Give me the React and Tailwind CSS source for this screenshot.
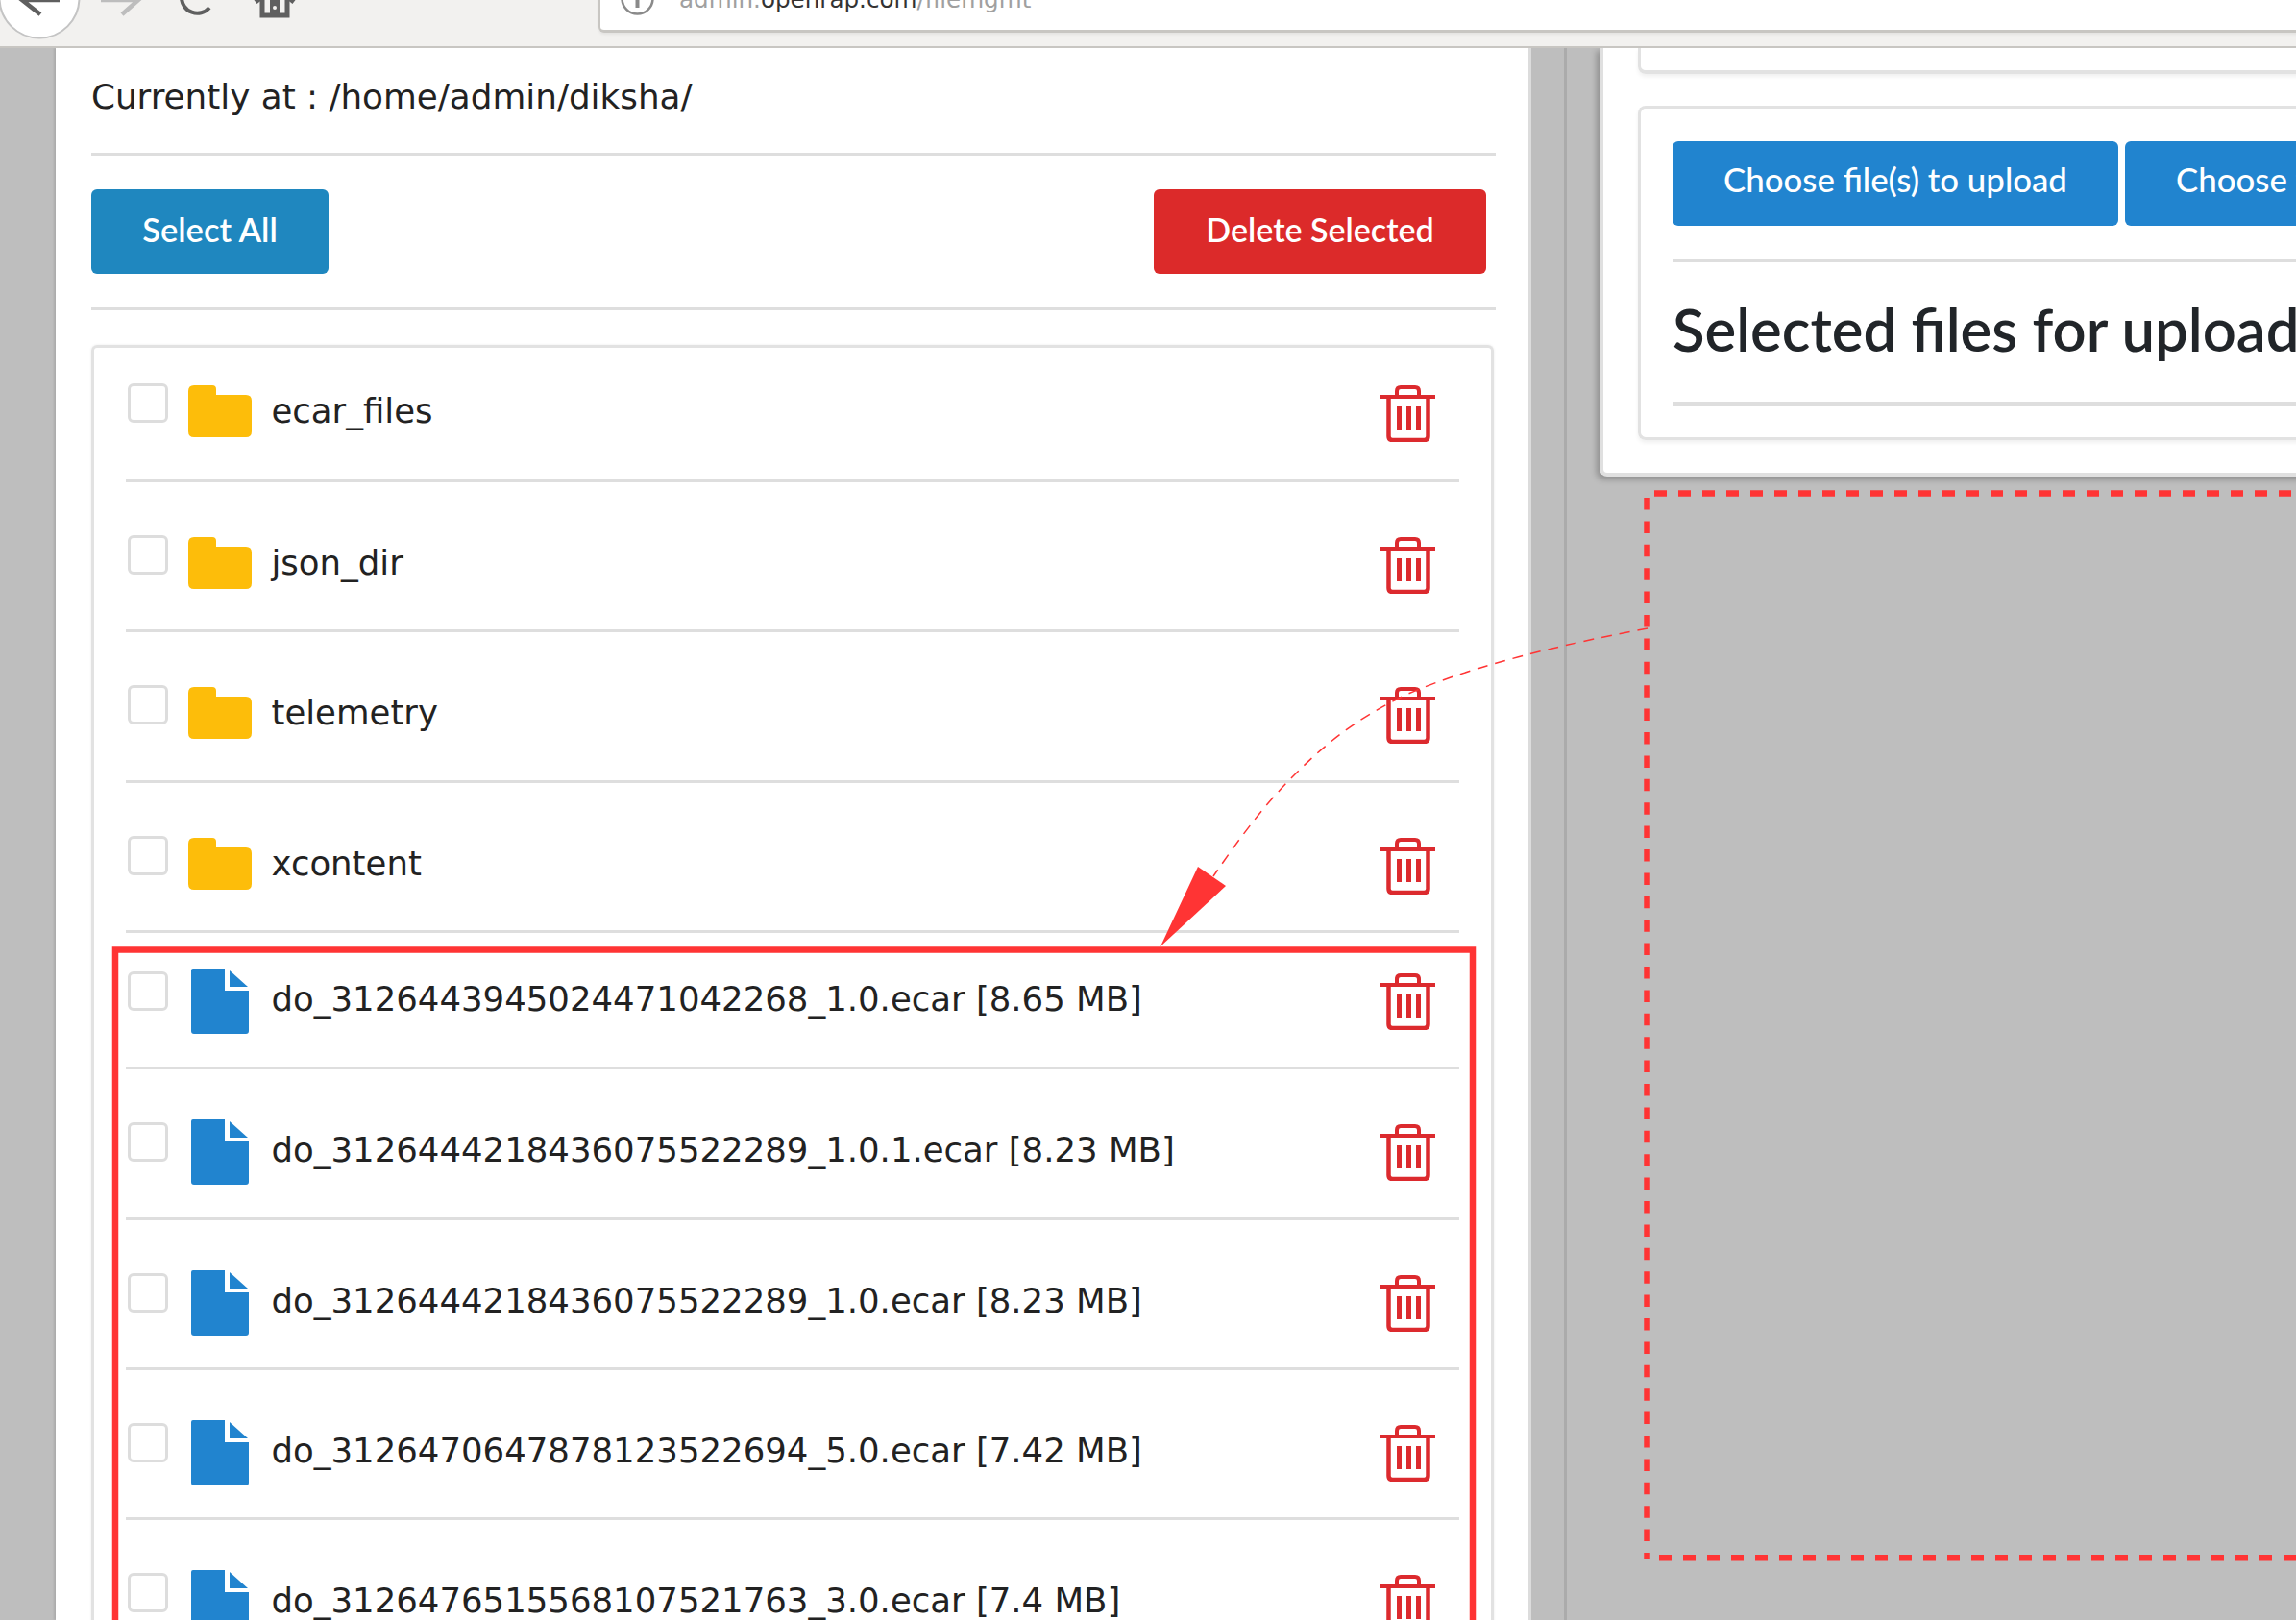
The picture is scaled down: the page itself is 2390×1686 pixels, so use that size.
const dejavu = 'font-["DejaVu_Sans",sans-serif]';

const folders = ['ecar_files', 'json_dir', 'telemetry', 'xcontent'];
const files = [
  'do_3126443945024471042268_1.0.ecar [8.65 MB]',
  'do_3126444218436075522289_1.0.1.ecar [8.23 MB]',
  'do_3126444218436075522289_1.0.ecar [8.23 MB]',
  'do_3126470647878123522694_5.0.ecar [7.42 MB]',
  'do_3126476515568107521763_3.0.ecar [7.4 MB]',
];

function FolderIcon() {
  return (
    <svg width="66" height="54" viewBox="0 0 66 54" className="shrink-0">
      <path d="M6 0h19q4 0 4 4v6h31q6 0 6 6v32q0 6-6 6H6q-6 0-6-6V6q0-6 6-6z" fill="#fdbd0a" />
    </svg>
  );
}

function FileIcon() {
  return (
    <svg width="60" height="68" viewBox="0 0 60 68" className="mt-[-5px] shrink-0">
      <path d="M2 0h33v23h25v42q0 3-3 3H3q-3 0-3-3V2q0-2 2-2z" fill="#2184cf" />
      <path d="M40 2l19 17H40z" fill="#2184cf" />
    </svg>
  );
}

function TrashIcon() {
  return (
    <svg width="57" height="59" viewBox="0 0 57 59" className="shrink-0" fill="none" stroke="#dc2a2e">
      <path d="M17 10V6q0-4 4-4h15q4 0 4 4v4" strokeWidth="4" />
      <path d="M0 12h57" strokeWidth="4" />
      <path d="M8.500 12v41q0 4 4 4h33q4 0 4-4V12" strokeWidth="4.500" />
      <path d="M19.500 22v24M29.500 22v24M39.500 22v24" strokeWidth="5" />
    </svg>
  );
}

function Row({ name, isFolder, topPad }) {
  return (
    <li className={`mx-[33px] flex border-b-[3px] border-[#dedede] pl-[1.5px] ${topPad}`}>
      <span className="mt-[-2px] h-[41px] w-[42px] shrink-0 rounded-md border-[3px] border-[#dddddd] bg-white" />
      <span className="ml-[21px] flex w-[66px] shrink-0 justify-center">
        {isFolder ? <FolderIcon /> : <FileIcon />}
      </span>
      <span className={`ml-[21px] mt-[6px] flex-1 whitespace-nowrap text-[35.5px] leading-[42px] text-[#222222] ${dejavu}`}>{name}</span>
      <span className="mr-[25px]">
        <TrashIcon />
      </span>
    </li>
  );
}

function BrowserBar() {
  return (
    <div className="relative z-10 h-[50px] shrink-0 overflow-hidden border-b-2 border-[#c8c6c2] bg-[#f2f1ef]">
      {/* back, forward, reload, home */}
      <svg width="320" height="48" viewBox="0 0 320 48" className="absolute left-0 top-0" fill="none">
        <circle cx="41" cy="-2" r="41.500" fill="#ffffff" stroke="#c4c4c4" strokeWidth="2" />
        <path d="M62 0H24M42 15L23 0L42 -15" stroke="#5f5f5f" strokeWidth="4.500" />
        <path d="M105 0H144M127 15L144 0L127 -15" stroke="#bdbdbd" strokeWidth="4.500" />
        <path d="M189 -3a16.500 16.500 0 0 0 29 11" stroke="#5f5f5f" strokeWidth="4" />
        <path d="M273 -4V16H299V-4" stroke="#5f5f5f" strokeWidth="5" />
        <path d="M266 2L286 -14L306 2" stroke="#5f5f5f" strokeWidth="5" />
        <path d="M281 0h10v16h-10z" fill="#5f5f5f" />
        <circle cx="286" cy="8" r="2" fill="#f2f1ef" />
      </svg>
      <div className="absolute left-[623px] top-[-31px] flex h-[65px] w-[1800px] items-center rounded-bl-md border-b-[3px] border-l-2 border-[#c8c6c2] bg-white pl-[21px] shadow-[0_2px_3px_rgba(0,0,0,0.06)]">
        <svg width="35" height="35" viewBox="0 0 35 35" className="mt-[-4px] shrink-0" fill="none" stroke="#8a8a8a">
          <circle cx="17.500" cy="17.500" r="16" strokeWidth="2.500" />
          <path d="M17.500 17v10" strokeWidth="4" />
        </svg>
        <span className={`ml-[26px] text-[24.6px] text-[#a0a0a0] ${dejavu}`}>
          admin.<span className="text-[#333333]">openrap.com</span>/filemgmt
        </span>
      </div>
    </div>
  );
}

function Annotations() {
  return (
    <svg className="pointer-events-none absolute inset-0 z-20" width="2390" height="1686" fill="none">
      <path d="M1715 654C1640 668 1540 690 1466 722C1410 748 1375 778 1341 813C1310 845 1285 880 1263 912" stroke="#ff3434" strokeWidth="1.500" strokeDasharray="11 8" />
      <path d="M1208 985L1247 902L1276 922Z" fill="#ff3434" />
      <path d="M1533 1686V988.500H120V1686" stroke="#ff3434" strokeWidth="6.500" />
      <path d="M1722 513.500H2390" stroke="#ff3434" strokeWidth="6.500" strokeDasharray="13 12" />
      <path d="M1714.500 518V1622" stroke="#ff3434" strokeWidth="6.500" strokeDasharray="12.500 11.900" />
      <path d="M1727 1621.300H2390" stroke="#ff3434" strokeWidth="6.500" strokeDasharray="13 12" />
    </svg>
  );
}

export default function App() {
  return (
    <div className="relative flex h-[1686px] w-[2390px] flex-col overflow-hidden bg-[#bebebe]">
      <BrowserBar />
      <div className="flex min-h-0 flex-1">
        {/* Left: file manager */}
        <div className="ml-[58px] w-[1536px] shrink-0 border-r-[3px] border-[#dcdcdc] bg-white pl-[37px] pr-[34px] shadow-[-2px_0_2px_rgba(0,0,0,0.1)]">
          <p className={`flex h-[112px] items-center border-b-[3px] border-[#dedede] pb-[8px] text-[35.75px] text-[#222222] ${dejavu}`}>
            Currently at : /home/admin/diksha/
          </p>
          <div className="flex h-[161px] items-center justify-between border-b-[4px] border-[#dedede] pr-[10px]">
            <button className="flex h-[88px] w-[247px] items-center justify-center rounded-md bg-[#1f87bf] pb-[4px] font-['Lato',sans-serif] text-[34.5px] font-semibold text-white">
              Select All
            </button>
            <button className="flex h-[88px] w-[346px] items-center justify-center rounded-md bg-[#dc2a2a] pb-[4px] font-['Lato',sans-serif] text-[34px] font-semibold text-white">
              Delete Selected
            </button>
          </div>
          <div className="mt-[36px] mr-[2px] rounded-t-md border-[3px] border-b-0 border-[#e2e2e2] shadow-[0_0_3px_rgba(0,0,0,0.08)]">
            <ul>
              {folders.map((name, i) => (
                <Row
                  key={name}
                  name={name}
                  isFolder
                  topPad={i === 0 ? 'h-[139.5px] pt-[38.5px]' : 'h-[156.6px] pt-[57px]'}
                />
              ))}
            </ul>
            <ul>
              {files.map((name, i) => (
                <Row
                  key={name}
                  name={name}
                  topPad={i === 0 ? 'h-[142px] pt-[42px]' : 'h-[156.4px] pt-[57px]'}
                />
              ))}
            </ul>
          </div>
        </div>

        {/* Right: upload */}
        <div className="ml-[34px] min-w-0 flex-1 border-l-[3px] border-[#ababab] pl-[34px]">
          <div className="h-[446px] w-[760px] rounded-bl-lg border-b-4 border-l-4 border-[#e0e0e0] bg-white pl-[36px] shadow-[-3px_3px_6px_rgba(0,0,0,0.25)]">
            <div className="h-[27px] rounded-bl-lg border-b-4 border-l-[3px] border-[#e2e2e2] shadow-[0_3px_4px_rgba(0,0,0,0.06)]" />
            <div className="mt-[33px] h-[348px] rounded-l-lg border-y-[3px] border-l-[3px] border-[#e2e2e2] pl-[33px] shadow-[0_3px_4px_rgba(0,0,0,0.06)]">
              <div className="flex h-[160px] items-center gap-[7px] border-b-[3px] border-[#dedede] pb-[1px]">
                <button className="flex h-[88px] w-[464px] shrink-0 items-center justify-center rounded-md bg-[#2184cf] pb-[8px] font-['Lato',sans-serif] text-[34.8px] font-medium text-white">
                  Choose file(s) to upload
                </button>
                <button className="flex h-[88px] w-[420px] shrink-0 items-center justify-start rounded-md bg-[#2184cf] pb-[8px] pl-[53px] font-['Lato',sans-serif] text-[34.8px] font-medium text-white">
                  Choose folder
                </button>
              </div>
              <h2 className="flex h-[150px] items-center whitespace-nowrap border-b-[5px] border-[#dedede] pb-[7px] font-['Lato',sans-serif] text-[61.6px] font-semibold text-[#212529]">
                Selected files for upload
              </h2>
            </div>
          </div>
        </div>
      </div>
      <Annotations />
    </div>
  );
}
